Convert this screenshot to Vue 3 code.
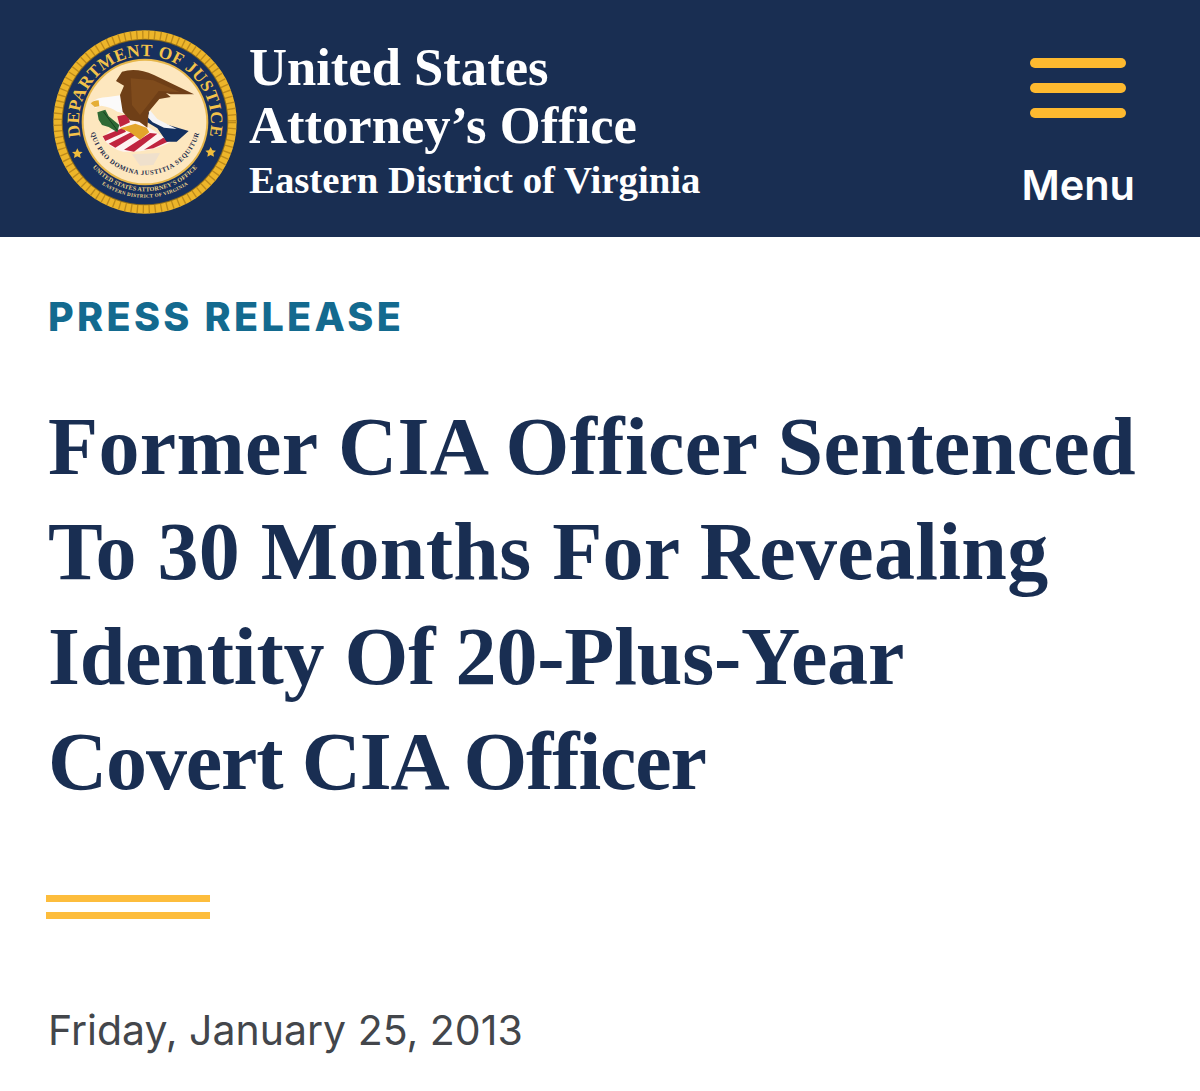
<script setup>
const titleLines = [
  { text: 'Former CIA Officer Sentenced', tracking: 0.33 },
  { text: 'To 30 Months For Revealing', tracking: 0.28 },
  { text: 'Identity Of 20-Plus-Year', tracking: -0.2 },
  { text: 'Covert CIA Officer', tracking: -1.15 }
]
</script>

<template>
  <div class="page">
    <header class="site-header">
      <div class="brand">
        <svg class="seal" viewBox="36 42 558 558" aria-label="Department of Justice seal">
          <defs>
            <path id="arcTop" d="M 153 435 A 198 198 0 1 1 477 435" />
            <path id="arcMotto" d="M 147 312 A 168 168 0 0 0 483 312" />
            <path id="arcLow1" d="M 128 411 A 207 207 0 0 0 502 411" />
            <path id="arcLow2" d="M 118 434 A 227 227 0 0 0 512 434" />
          </defs>
          <!-- rope border -->
          <circle cx="315" cy="321" r="275" fill="#edb52a" />
          <circle cx="315" cy="321" r="262" fill="none" stroke="#bd8a1b" stroke-width="25" stroke-dasharray="4 14" />
          <circle cx="315" cy="321" r="250" fill="#8c6a1a" />
          <circle cx="315" cy="321" r="247" fill="#17305e" />
          <circle cx="315" cy="321" r="190" fill="#e6b64a" />
          <circle cx="315" cy="321" r="184" fill="#fde7bf" />
          <!-- shield -->
          <path d="M188 368 L262 300 L330 340 L394 380 Q330 414 250 410 Q212 402 188 368Z" fill="#fdf3f0" />
          <path d="M188 364 L250 338 L258 350 L196 378Z M206 386 L276 350 L300 352 L226 398Z M252 404 L330 354 L352 356 L282 410Z M312 404 L370 368 L388 378 L340 400Z" fill="#c0243f" />
          <path d="M232 304 L262 298 L270 322 L240 336Z" fill="#c0243f" />
          <path d="M322 288 L352 320 L446 348 L410 380 L380 380 L352 340 L322 322Z" fill="#14305f" />
          <path d="M330 286 L352 312 L410 342 L372 338 L338 322 L322 306Z" fill="#f4f4f6" />
          <!-- olive branch -->
          <path d="M172 292 L196 284 L206 304 L238 330 L232 352 L206 336 L186 330 L176 314Z" fill="#2f6a35" />
          <path d="M190 290 L232 346" stroke="#173f20" stroke-width="3" fill="none" />
          <!-- head -->
          <path d="M152 265 Q170 246 204 246 L246 240 L262 298 L232 290 Q214 276 184 272 L166 278Z" fill="#fbfafa" />
          <path d="M152 265 Q160 256 176 256 L178 274 L164 276Z" fill="#e5ae35" />
          <!-- body and wings -->
          <path d="M246 170 Q290 156 342 180 L462 238 L392 238 L378 234 L392 246 L358 252 L326 290 L322 338 L298 320 L270 316 L248 290 L240 240 L252 212 L228 198Z" fill="#6f3f17" />
          <path d="M272 190 L340 196 L420 232 L356 228 L330 262 L300 300 L276 270Z" fill="#7f4b1c" />
          <!-- talons -->
          <path d="M240 340 L286 326 L320 338 L328 352 L300 374 L270 352Z" fill="#e3a52b" />
          <!-- tail feathers -->
          <path d="M276 418 L360 414 L340 450 L300 452Z" fill="#efe0cc" />
          <!-- stars -->
          <path d="M112 400l5 10 11 1-8 7 2 11-10-5-10 5 2-11-8-7 11-1z" fill="#f1bd3c" />
          <path d="M512 396l5 10 11 1-8 7 2 11-10-5-10 5 2-11-8-7 11-1z" fill="#f1bd3c" />
          <!-- lettering -->
          <text class="seal-top"><textPath href="#arcTop" startOffset="50%" text-anchor="middle">DEPARTMENT OF JUSTICE</textPath></text>
          <text class="seal-low"><textPath href="#arcLow1" startOffset="50%" text-anchor="middle">UNITED STATES ATTORNEY'S OFFICE</textPath></text>
          <text class="seal-low small"><textPath href="#arcLow2" startOffset="50%" text-anchor="middle">EASTERN DISTRICT OF VIRGINIA</textPath></text>
          <text class="seal-motto"><textPath href="#arcMotto" startOffset="50%" text-anchor="middle">QUI PRO DOMINA JUSTITIA SEQUITUR</textPath></text>
        </svg>
        <div class="office">
          <div class="office-name">United States</div>
          <div class="office-name">Attorney’s Office</div>
          <div class="district">Eastern District of Virginia</div>
        </div>
      </div>
      <button class="menu" type="button">
        <span class="bars"><i></i><i></i><i></i></span>
        <span class="menu-label">Menu</span>
      </button>
    </header>

    <main class="content">
      <div class="eyebrow">PRESS RELEASE</div>
      <h1 class="headline">
        <span
          v-for="line in titleLines"
          :key="line.text"
          :style="{ letterSpacing: line.tracking + 'px' }"
        >{{ line.text }}</span>
      </h1>
      <div class="rule"></div>
      <div class="date">Friday, January 25, 2013</div>
    </main>
  </div>
</template>

<style>
html, body { margin: 0; background: #fff; }
</style>

<style scoped>
.page {
  width: 1200px;
  height: 1091px;
  overflow: hidden;
  background: #fff;
}
.site-header {
  height: 237px;
  box-sizing: border-box;
  background: #192e52;
  display: flex;
  align-items: flex-start;
  justify-content: space-between;
  padding: 29px 65px 0 52px;
}
.brand { display: flex; align-items: flex-start; gap: 11px; }
.seal { width: 186px; height: 186px; flex: none; }
.seal-top { font: 700 52px "Liberation Serif", serif; fill: #f3c24a; letter-spacing: 1.5px; }
.seal-low { font: 700 18.5px "Liberation Serif", serif; fill: #f1d98a; letter-spacing: 0.5px; }
.seal-low.small { font-size: 15px; letter-spacing: 1px; }
.seal-motto { font: 700 20px "Liberation Serif", serif; fill: #1a2a4a; letter-spacing: 2px; }
.office { color: #fff; font-family: "Liberation Serif", serif; font-weight: 700; padding-top: 9px; }
.office-name { font-size: 52.6px; line-height: 58px; }
.district { font-size: 38.8px; line-height: 52px; }
.menu {
  border: 0; padding: 29px 0 0; background: none; color: #fff;
  display: flex; flex-direction: column; align-items: center;
}
.bars { display: flex; flex-direction: column; gap: 15px; }
.bars i { display: block; width: 96px; height: 10px; border-radius: 5px; background: #fdb92f; }
.menu-label { font: 600 41.5px/52px Inter, "Liberation Sans", sans-serif; margin-top: 41px; }
.content { padding: 56px 48px 0; }
.eyebrow { font: 800 39.5px/48px Inter, "Liberation Sans", sans-serif; letter-spacing: 3.3px; color: #136a8f; }
.headline {
  margin: 53px 0 0; font: 700 82px/105px "Liberation Serif", serif; color: #192e52;
}
.headline span { display: block; white-space: nowrap; }
.rule {
  margin: 81px 0 0 -2px; width: 164px; height: 24px; box-sizing: border-box;
  border-top: 7px solid #fdbd3c; border-bottom: 7px solid #fdbd3c;
}
.date { margin-top: 87px; font: 400 41px/48px Inter, "Liberation Sans", sans-serif; color: #43464b; }
</style>
